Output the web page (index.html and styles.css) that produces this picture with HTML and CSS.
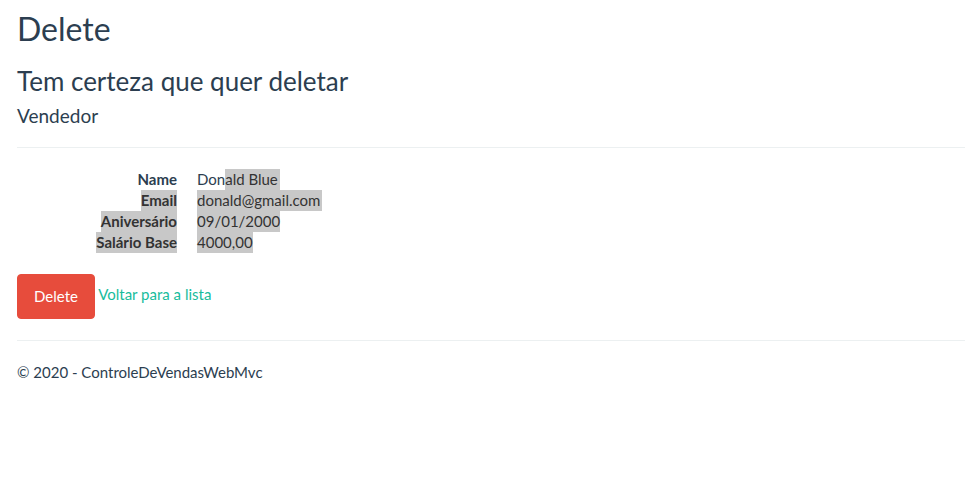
FILE: index.html
```html
<!DOCTYPE html>
<html lang="pt-BR">
<head>
<meta charset="utf-8">
<title>Delete - ControleDeVendasWebMvc</title>
<link rel="stylesheet" href="styles.css">
</head>
<body>
<main class="container">
  <h2>Delete</h2>
  <h3>Tem certeza que quer deletar</h3>
  <h4>Vendedor</h4>
  <hr>
  <dl class="details">
    <dt>Name</dt>
    <dd>Don<span class="selected line-end">ald Blue</span></dd>
    <dt><span class="selected">Email</span></dt>
    <dd><span class="selected line-end">donald@gmail.com</span></dd>
    <dt><span class="selected">Aniversário</span></dt>
    <dd><span class="selected">09/01/2000</span></dd>
    <dt><span class="selected">Salário Base</span></dt>
    <dd><span class="selected">4000,00</span></dd>
  </dl>
  <form class="actions">
    <button type="button" class="btn-danger">Delete</button>
    <a href="#">Voltar para a lista</a>
  </form>
  <hr>
  <footer><p>© 2020 - ControleDeVendasWebMvc</p></footer>
</main>
</body>
</html>
```

FILE: styles.css
```css
* {
  box-sizing: border-box;
}

body {
  margin: 0;
  background: #fff;
  color: #2c3e50;
  font: 15px/21px Lato, "Liberation Sans", sans-serif;
}

.container {
  padding: 11px 0 0 17px;
}

h2, h3, h4 {
  margin: 0;
  font-weight: 400;
}

h2 {
  margin-bottom: 21px;
  font-size: 32px;
  line-height: 35px;
}

h3 {
  margin-bottom: 9px;
  font-size: 26px;
  line-height: 29px;
}

h4 {
  font-size: 19px;
  line-height: 21px;
}

hr {
  margin: 21px 0;
  border: 0;
  border-top: 1px solid #ecf0f1;
}

.details {
  display: grid;
  grid-template-columns: 160px 1fr;
  column-gap: 20px;
  margin: 0 0 21px;
}

dt {
  font-weight: 700;
  text-align: right;
}

dd {
  margin: 0;
}

.selected {
  display: inline-block;
  background: #c8c8c8;
  color: #333;
}

/* A selection that runs past the end of a line covers the line break too. */
.line-end {
  padding-right: 2px;
}

.btn-danger {
  padding: 11px 16px;
  border: 1px solid #e74c3c;
  border-radius: 4px;
  background: #e74c3c;
  color: #fff;
  font: inherit;
  vertical-align: middle;
}

a {
  color: #18bc9c;
  text-decoration: none;
}

p {
  margin: 0;
}
```
